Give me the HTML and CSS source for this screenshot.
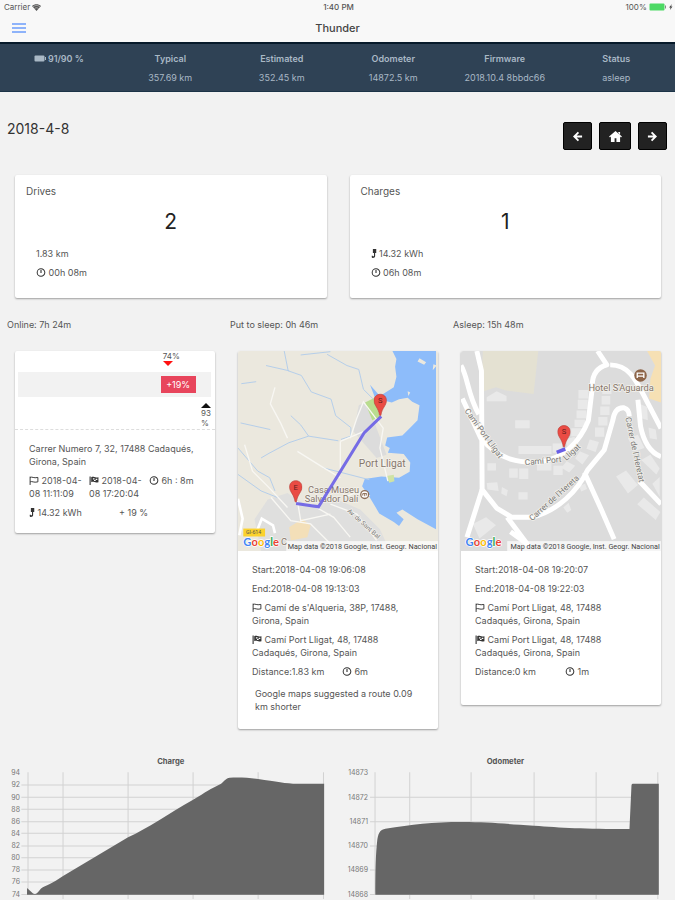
FILE: index.html
```html
<!DOCTYPE html>
<html lang="en">
<head>
    <meta charset="utf-8">
    <meta name="viewport" content="width=device-width, initial-scale=1">
    <title>Thunder</title>
    <link rel="stylesheet" href="styles.css">
</head>
<body>
    <svg class="sprite" aria-hidden="true">
        <symbol id="clock" viewBox="0 0 16 16"><circle cx="8" cy="8" r="6.8" fill="none" stroke="currentColor" stroke-width="1.8"/><path d="M8 3.5V9" fill="none" stroke="currentColor" stroke-width="2"/></symbol>
        <symbol id="flag" viewBox="0 0 18 16"><path d="M2 1v15M2 2.5c4-2 6 2 14 0v8c-8 2-10-2-14 0" fill="none" stroke="currentColor" stroke-width="1.7"/></symbol>
        <symbol id="finish" viewBox="0 0 18 16"><path d="M1 1h2v15H1zM4 2c5-2 6 2 13 0v9c-7 2-8-2-13 0z" fill="currentColor"/><path d="M7 4h3v2H7zM12 5h3v2h-3zM9 7h3v2H9z" fill="#fff"/></symbol>
        <symbol id="plug" viewBox="0 0 10 16"><path d="M3 0h6v7H7v6c0 3-6 4-6 1v-2h2v1h2V7H3z" fill="currentColor"/></symbol>
        <symbol id="pin" viewBox="0 0 40 68"><path d="M20 1C9 1 1 9 1 20c0 15 14 22 17 45h4c3-23 17-30 17-45C39 9 31 1 20 1z" fill="#ea4b44" stroke="#b8413c" stroke-width="2"/></symbol>
    </svg>

    <header class="header">
        <div class="status-bar">
            <span class="carrier">Carrier <svg class="wifi" viewBox="0 0 18 14"><path d="M0 4C5-1 13-1 18 4L9 14z" fill="#555"/><path d="M2 6c4-4 10-4 14 0M5 9c3-2 5-2 8 0" fill="none" stroke="#f8f8f8"/></svg></span>
            <span class="time">1:40 PM</span>
            <span class="power">100% <svg class="battery" viewBox="0 0 48 16"><rect x="1" y="1" width="30" height="14" rx="2" fill="#4cd964"/><path d="M33 5v6" stroke="#888" stroke-width="2"/><path d="M46 2l-6 7h3l-1 5 5-7h-3z" fill="#444"/></svg></span>
        </div>
        <div class="nav-bar">
            <button class="menu-btn" aria-label="Menu"><svg viewBox="0 0 14 10"><path d="M0 1h14M0 5h14M0 9h14" stroke="#6b9cfa" stroke-width="1.4"/></svg></button>
            <h1>Thunder</h1>
        </div>
    </header>

    <section class="stats">
        <div class="stat"><b><svg class="stat-battery" viewBox="0 0 24 14"><rect x="1" y="1" width="20" height="12" rx="2" fill="#a9b8c5"/><path d="M22 4h2v6h-2z" fill="#a9b8c5"/></svg> 91/90 %</b></div>
        <div class="stat"><b>Typical</b><span>357.69 km</span></div>
        <div class="stat"><b>Estimated</b><span>352.45 km</span></div>
        <div class="stat"><b>Odometer</b><span>14872.5 km</span></div>
        <div class="stat"><b>Firmware</b><span>2018.10.4 8bbdc66</span></div>
        <div class="stat"><b>Status</b><span>asleep</span></div>
    </section>

    <main class="content">
        <div class="toolbar">
            <h2>2018-4-8</h2>
            <div class="buttons">
                <button aria-label="Previous day"><svg viewBox="0 0 12 12"><path d="M7 1.5L2.5 6 7 10.5M2.5 6H11" fill="none" stroke="#fff" stroke-width="2"/></svg></button>
                <button class="home" aria-label="Today"><svg viewBox="0 0 14 12"><path d="M7 0l7 6-1 1-1-1v6H8V8H6v4H2V6L1 7 0 6zM10 1h2v3l-2-2z" fill="#fff"/></svg></button>
                <button aria-label="Next day"><svg viewBox="0 0 12 12"><path d="M5 1.5L9.5 6 5 10.5M9.5 6H1" fill="none" stroke="#fff" stroke-width="2"/></svg></button>
            </div>
        </div>

        <div class="row summary">
            <div class="col">
                <div class="card total">
                    <h3>Drives</h3>
                    <div class="count">2</div>
                    <p>1.83 km</p>
                    <p><svg class="icon"><use href="#clock"/></svg> 00h 08m</p>
                </div>
            </div>
            <div class="col">
                <div class="card total">
                    <h3>Charges</h3>
                    <div class="count">1</div>
                    <p><svg class="icon plug"><use href="#plug"/></svg> 14.32 kWh</p>
                    <p><svg class="icon"><use href="#clock"/></svg> 06h 08m</p>
                </div>
            </div>
        </div>

        <div class="row states">
            <div class="col">Online: 7h 24m</div>
            <div class="col">Put to sleep: 0h 46m</div>
            <div class="col">Asleep: 15h 48m</div>
        </div>

        <div class="row">
            <div class="col">
                <div class="card">
                    <div class="charge-range">
                        <div class="from"><span>74%</span></div>
                        <div class="track"><div class="added" style="margin-left: 74%; width: 18%">+19%</div></div>
                        <div class="to"><span>93<br>%</span></div>
                    </div>
                    <div class="details">
                        <p>Carrer Numero 7, 32, 17488 Cadaqués, Girona, Spain</p>
                        <div class="cells">
                            <p><svg class="icon"><use href="#flag"/></svg> 2018-04-08 11:11:09</p>
                            <p><svg class="icon"><use href="#finish"/></svg> 2018-04-08 17:20:04</p>
                            <p><svg class="icon"><use href="#clock"/></svg> 6h : 8m</p>
                        </div>
                        <div class="cells">
                            <p><svg class="icon plug"><use href="#plug"/></svg> 14.32 kWh</p>
                            <p>+ 19 %</p>
                        </div>
                    </div>
                </div>
            </div>

            <div class="col">
                <div class="card">
                    <svg class="map" viewBox="20 36 606 606">
                        <rect x="20" y="36" width="606" height="606" fill="#ebe8de"/>
                        <!-- town -->
                        <path d="M90 642l-20-96 40-60 60-20 60 40 90-20 70 30 60 60 30 66z" fill="#dfdfde"/>
                        <path d="M386 200l24-10 60 160-30 10-70-80z" fill="#dcdcdc"/>
                        <path d="M175 570l40-25 25 20-10 35-50 10z" fill="#f3dfb8"/>
                        <path d="M405 192l32-16 12 60-22 10z" fill="#b9dd8f"/>
                        <!-- sea -->
                        <path d="M488 36L500 60l-4 24 4 30-8 32-42 26-30-34 16 42 50 12 22-10 26-4 14 12 22 10-6 46-20 20-26 26-46 6-6 24 14 8-6 14 48 4 20 26-2 28-32 18-54-4-50 8-8 22 22 32 30 50 44 26 16 12 14-20-22-20 18-10 46 30 56 30V36z" fill="#8dbcfa"/>
                        <path d="M534 158l8 4-6 10zM570 58l20 12-6 8-20-10zM612 76l10 4-12 14z" fill="#ebe8de"/>
                        <path d="M470 415l22-4 2 20-16 4z" fill="#cfe3a5"/>
                        <g fill="none" stroke="#b4cdea" stroke-width="3">
                            <path d="M160 36l12 60 40 14 30 50 60 22 14 50 46 36v26l-30 10"/>
                            <path d="M105 80l70 16M210 48l90-10M290 46l60 34 36 12 14 60 30 30"/>
                            <path d="M180 232l30 28 24 34 90 14M234 294l-60 20-60 32-24 14M20 330l60 70 36 20 16 40M28 254l90 20M30 135l45-6M278 390l140 36M20 410l70 50 50 20"/>
                        </g>
                        <g fill="none" stroke="#f8f7f3" stroke-width="4">
                            <path d="M132 146l-14 50 32 60 20 44M40 320l24 80 50 50 56 60M200 340l80 50 50 30"/>
                            <path d="M360 300l20-60 20-50 60 80-10 60 24 100M330 310l70-30M330 310v90l-50 80"/>
                            <path d="M120 480l60 70 60 10 60 60M240 500l70 40 50 60M300 500l80 30 60 80M340 480l40-16 40 10M200 490l10 60 90-20"/>
                        </g>
                        <path d="M20 484l14 60-10 50M78 580l14-36 34 20 6 24" fill="none" stroke="#fff" stroke-width="8"/>
                        <g class="place">
                            <text class="town" x="386" y="388">Port Lligat</text>
                            <text x="232" y="466">Casa Museu</text>
                            <text x="222" y="494">Salvador Dalí</text>
                            <text class="street" transform="translate(350 522) rotate(42)">Av. de Sant Bal</text>
                        </g>
                        <path d="M196 498l68 10L402 284l52-50" fill="none" stroke="#695ee6" stroke-opacity=".9" stroke-width="9"/>
                        <use href="#pin" x="431" y="164" width="40" height="72"/>
                        <use href="#pin" x="175" y="426" width="40" height="72"/>
                        <g class="pin-label"><text x="451" y="194">S</text><text x="195" y="456">E</text></g>
                        <circle cx="404" cy="471" r="12" fill="#fff" stroke="#8d6e58" stroke-width="4"/>
                        <path d="M398 474v-6h12v6M404 466v10" fill="none" stroke="#8d6e58" stroke-width="3"/>
                        <rect x="36" y="574" width="66" height="24" fill="#fbd22d"/>
                        <text class="road" x="44" y="592">GI-614</text>
                        <rect x="166" y="612" width="460" height="30" fill="#fff" opacity=".7"/>
                        <text class="google" x="36" y="627"><tspan fill="#4285f4">G</tspan><tspan fill="#ea4335">o</tspan><tspan fill="#fbbc05">o</tspan><tspan fill="#4285f4">g</tspan><tspan fill="#34a853">l</tspan><tspan fill="#ea4335">e</tspan></text>
                        <text class="place" x="150" y="624">C</text>
                        <text class="copyright" x="623" y="635">Map data ©2018 Google, Inst. Geogr. Nacional</text>
                    </svg>
                    <div class="details">
                        <p>Start:2018-04-08 19:06:08</p>
                        <p>End:2018-04-08 19:13:03</p>
                        <p><svg class="icon"><use href="#flag"/></svg> Camí de s'Alqueria, 38P, 17488, Girona, Spain</p>
                        <p><svg class="icon"><use href="#finish"/></svg> Camí Port Lligat, 48, 17488 Cadaqués, Girona, Spain</p>
                        <div class="cells">
                            <p>Distance:1.83 km</p>
                            <p><svg class="icon"><use href="#clock"/></svg> 6m</p>
                        </div>
                        <div class="note">Google maps suggested a route 0.09 km shorter</div>
                    </div>
                </div>
            </div>

            <div class="col">
                <div class="card">
                    <svg class="map" viewBox="30 36 606 606">
                        <rect x="30" y="36" width="606" height="606" fill="#dcdcdc"/>
                        <path d="M96 36h168l-14 130-84-10-30-10-44 14z" fill="#e4e1d2"/>
                        <path d="M594 36h42v156l-36-12 4-60 14-40z" fill="#f6e0b4"/>
                        <!-- buildings -->
                        <g fill="#e9e9e9">
                            <path d="M108 176l30-18 30 14v16h-60zM194 246h44v24h-44zM204 324h100v24H204zM176 392h26v28h-26zM206 392h28v32h-28zM110 376h26v22h-26zM204 464h28v22h-28zM108 436l32-2 4 26-34-4zM154 448l18 10-4 18-16-8zM66 560l40-20 30 24-50 40zM340 510l16-14 8 22-12 8zM388 444l18-6 6 16-18 8z"/>
                            <path d="M386 154h30v26h-30zM384 184h30v28h-30zM380 216h30v24h-30zM374 244h32v22h-32zM364 270h32v24h-32zM346 304l28-8 8 24-28 10zM308 316h28v28h-28z"/>
                            <path d="M458 140h28v26h-28zM456 172h26v26h-26zM452 204h28v26h-28zM446 236h28v26h-28zM436 268h28v28h-28zM420 304l28 8-10 30-28-10zM390 340l28 12-20 28-22-18zM350 370l26 14-18 20-24-14zM310 384h28v28h-28zM260 374h44v24h-44z"/>
                            <path d="M500 416l30-18 36 44-30 26zM564 500l20-20 50 44-14 24zM570 196l24 10 2 40-24-8zM598 268l22 6 4 30-22-4zM576 366l28-16 28 42-10 18zM610 438l22-20v60zM536 300l30-10 20 40-30 10z"/>
                        </g>
                        <g fill="none" stroke="#fff" stroke-width="15" stroke-linejoin="round">
                            <path d="M78 36l14 60 2 360 44 56 46 28h60c80-20 140-80 170-144l50-60 26-90c4-26 14-40 34-38 14 4 16 14 16 26"/>
                            <path d="M30 80c20 30 20 90 54 148M34 180l56 120c60 70 120 76 180 72 70-10 120-60 146-126l12-100c-2-40 14-60 44-68l-28-42M482 78c60 0 80 50 112 112l42 80M566 184l8 80c10 50 30 80 62 92"/>
                            <path d="M94 456L48 600M170 540l60 80-50-36M404 404l50 110 40 92M570 430l66 70"/>
                        </g>
                        <path d="M320 343l26-10" fill="none" stroke="#695ee6" stroke-width="11"/>
                        <use href="#pin" x="322" y="258" width="40" height="74"/>
                        <text class="pin-label" x="342" y="289">S</text>
                        <g class="place">
                            <text x="416" y="158">Hotel S'Aguarda</text>
                            <text class="street big" transform="translate(40 218) rotate(54)">Camí Port Lligat</text>
                            <text class="street big" transform="translate(224 382) rotate(-5)">Camí Port</text>
                            <text class="street big" transform="translate(349 369) rotate(-42)">Lligat</text>
                            <text class="street big" transform="translate(246 552) rotate(-42)">Carrer de l'Hereta</text>
                            <text class="street big" transform="translate(528 238) rotate(78)">Carrer de l'Heretat</text>
                        </g>
                        <circle cx="574" cy="110" r="19" fill="#8d6549"/>
                        <path d="M564 118v-15h20v15M564 112h20" fill="none" stroke="#fff" stroke-width="4"/>
                        <rect x="170" y="612" width="466" height="30" fill="#fff" opacity=".7"/>
                        <text class="google" x="44" y="627"><tspan fill="#4285f4">G</tspan><tspan fill="#ea4335">o</tspan><tspan fill="#fbbc05">o</tspan><tspan fill="#4285f4">g</tspan><tspan fill="#34a853">l</tspan><tspan fill="#ea4335">e</tspan></text>
                        <text class="copyright" x="632" y="635">Map data ©2018 Google, Inst. Geogr. Nacional</text>
                    </svg>
                    <div class="details">
                        <p>Start:2018-04-08 19:20:07</p>
                        <p>End:2018-04-08 19:22:03</p>
                        <p><svg class="icon"><use href="#flag"/></svg> Camí Port Lligat, 48, 17488 Cadaqués, Girona, Spain</p>
                        <p><svg class="icon"><use href="#finish"/></svg> Camí Port Lligat, 48, 17488 Cadaqués, Girona, Spain</p>
                        <div class="cells">
                            <p>Distance:0 km</p>
                            <p><svg class="icon"><use href="#clock"/></svg> 1m</p>
                        </div>
                        <div class="note"></div>
                    </div>
                </div>
            </div>
        </div>

        <div class="row charts">
            <svg class="chart" viewBox="9 0 1003 462">
                <text class="chart-title" x="512" y="56">Charge</text>
                <path class="grid" d="M64 120h907M64 157h907M64 193h907M64 230h907M64 265h907M64 303h907M64 338h907M64 375h907M64 411h907M64 448h907"/>
                <path class="grid" d="M84 82v366M189 82v383M384 82v383M579 82v383M774 82v383M970 82v383"/>
                <path class="area" d="M81 449v-20l18 16c8 4 12 0 24-15 14-8 34-15 66-37L384 277c60-28 120-70 195-113 40-24 50-32 84-48 10-8 14-16 26-18 30-1 60 0 85 4 60 8 90 16 130 14h68v333z"/>
                <g class="ticks">
                    <text x="60" y="89">94</text><text x="60" y="127">92</text><text x="60" y="164">90</text><text x="60" y="200">88</text><text x="60" y="237">86</text><text x="60" y="272">84</text><text x="60" y="310">82</text><text x="60" y="345">80</text><text x="60" y="382">78</text><text x="60" y="418">76</text><text x="60" y="455">74</text>
                </g>
            </svg>
            <svg class="chart" viewBox="8 0 1003 462">
                <text class="chart-title" x="510" y="56">Odometer</text>
                <path class="grid" d="M104 157h864M104 230h864M104 303h864M104 375h864M104 448h864"/>
                <path class="grid" d="M119 82v366M223 82v383M407 82v383M596 82v383M782 82v383M967 82v383"/>
                <path class="area" d="M120 449c0-90 2-130 6-166 4-24 10-28 24-32 80-12 140-20 230-20 80 0 120 5 216 11 80 6 150 10 286 10l6-130c0-5 2-6 6-6h76v333z"/>
                <g class="ticks">
                    <text x="98" y="89">14873</text><text x="98" y="164">14872</text><text x="98" y="237">14871</text><text x="98" y="310">14870</text><text x="98" y="382">14869</text><text x="98" y="455">14868</text>
                </g>
            </svg>
        </div>
    </main>
</body>
</html>
```
FILE: styles.css
```css
* {
    box-sizing: border-box;
}

body {
    margin: 0;
    background: #f2f2f2;
    font-family: Inter, "Liberation Sans", sans-serif;
    font-size: 9px;
    line-height: 13px;
    color: #555;
}

h1, h2, h3, p {
    margin: 0;
    font-weight: 400;
}

button {
    border: none;
    padding: 0;
    cursor: pointer;
}

svg {
    display: block;
}

.sprite {
    position: absolute;
    width: 0;
    height: 0;
}

.header {
    background: #f8f8f8;
}

.status-bar {
    display: grid;
    grid-template-columns: 1fr auto 1fr;
    padding: 1px 2px 0 4px;
    font-size: 8px;
}

.status-bar svg {
    display: inline-block;
    vertical-align: -1px;
}

.wifi {
    width: 9px;
    height: 7px;
}

.time {
    font-weight: 500;
}

.power {
    text-align: right;
}

.battery {
    width: 24px;
    height: 8px;
}

.nav-bar {
    display: grid;
    grid-template-columns: 1fr auto 1fr;
    align-items: center;
    height: 28px;
    padding: 0 12px;
}

.menu-btn {
    width: 14px;
    height: 10px;
    background: none;
}

.nav-bar h1 {
    font-size: 11px;
    font-weight: 500;
    color: #444;
}

.stats {
    display: grid;
    grid-template-columns: repeat(6, 1fr);
    padding: 8px 3px 7px;
    border-top: 2px solid #071a2a;
    border-bottom: 1px solid #1c3347;
    background: #2f4255;
    color: #a9b8c5;
    text-align: center;
}

.stat {
    display: flex;
    flex-direction: column;
    gap: 6px;
}

.stat b {
    font-weight: 600;
}

.stat-battery {
    display: inline-block;
    width: 12px;
    height: 7px;
}

.content {
    padding: 30px 3px 0;
}

.toolbar {
    display: flex;
    justify-content: space-between;
    align-items: flex-start;
    padding: 0 5px 0 4px;
    margin-bottom: 25px;
}

.toolbar h2 {
    font-size: 14px;
    color: #333;
}

.buttons {
    display: flex;
    gap: 7px;
}

.buttons button {
    display: flex;
    align-items: center;
    justify-content: center;
    width: 29px;
    height: 28px;
    border: 1px solid #000;
    border-radius: 2px;
    background: #222;
}

.buttons .home {
    width: 32px;
}

.buttons svg {
    width: 11px;
    height: 11px;
}

.buttons .home svg {
    width: 13px;
}

.row {
    display: flex;
    align-items: flex-start;
}

.col {
    flex: 1 1 0;
    min-width: 0;
    padding: 0 4px;
}

.card {
    margin: 0 7px 0 8px;
    border-radius: 2px;
    background: #fff;
    box-shadow: 0 1px 2px rgba(0, 0, 0, 0.35);
    overflow: hidden;
}

.total {
    padding: 10px 11px 19px;
}

.total h3 {
    font-size: 10px;
}

.total p {
    padding-left: 10px;
    margin-top: 6px;
}

.count {
    margin: 12px 0 13px;
    font-size: 21px;
    line-height: 24px;
    text-align: center;
    color: #222;
}

.states {
    margin: 20px 0;
}

.icon {
    display: inline-block;
    width: 10px;
    height: 9px;
    vertical-align: -1px;
    color: #333;
}

.plug {
    width: 6px;
}

/* battery level before and after the charge */
.charge-range {
    height: 79px;
    padding: 0 4px 0 3px;
    border-bottom: 1px dashed #ddd;
    font-size: 8px;
    line-height: 10px;
}

.from {
    height: 21px;
    padding-left: 75%;
}

.from::after {
    content: "";
    display: block;
    width: 0;
    border: 5px solid transparent;
    border-top-color: #f11;
}

.track {
    height: 25px;
    padding: 4px 0;
    background: #f2f2f2;
}

.added {
    height: 17px;
    background: #e8455c;
    color: #fff;
    font-size: 9px;
    line-height: 17px;
    text-align: center;
}

.to {
    display: flex;
    flex-direction: column;
    align-items: flex-end;
    padding-top: 3px;
}

.to::before {
    content: "";
    border: 5px solid transparent;
    border-top-width: 3px;
    border-bottom-color: #111;
}

.map {
    width: 100%;
}

.map text {
    font-family: Roboto, sans-serif;
}

.place {
    font-size: 28px;
    fill: #85766b;
    stroke: #f4f2ec;
    stroke-width: 4px;
    paint-order: stroke;
}

.place .town {
    font-size: 31px;
}

.place .street {
    font-size: 19px;
    fill: #777;
}

.place .big {
    font-size: 25px;
}

.pin-label {
    font-size: 23px;
    fill: #61201c;
    text-anchor: middle;
}

.road {
    font-size: 16px;
    fill: #555;
}

.map .google {
    font-family: Lato, sans-serif;
    font-size: 34px;
    font-weight: 700;
    stroke: #fff;
    stroke-width: 4px;
    paint-order: stroke;
}

.copyright {
    font-size: 22px;
    fill: #444;
    text-anchor: end;
}

.details {
    padding: 12px 14px 14px;
}

.details p + p,
.details p + .cells,
.cells + .cells {
    margin-top: 6px;
}

.cells {
    display: flex;
    margin-right: -8px;
}

.cells p {
    flex: 1 1 0;
}

.details .cells p {
    margin-top: 0;
}

.note {
    min-height: 2px;
    margin: 9px 0 2px;
    padding: 0 3px;
}

.charts {
    margin-top: 16px;
}

.chart {
    flex: 1 1 0;
    min-width: 0;
}

.chart-title {
    font-size: 23px;
    font-weight: 700;
    fill: #555;
    text-anchor: middle;
}

.grid {
    fill: none;
    stroke: #d2d2d2;
    stroke-width: 3px;
}

.area {
    fill: #666;
}

.ticks {
    font-size: 21px;
    fill: #777;
    text-anchor: end;
}
```
